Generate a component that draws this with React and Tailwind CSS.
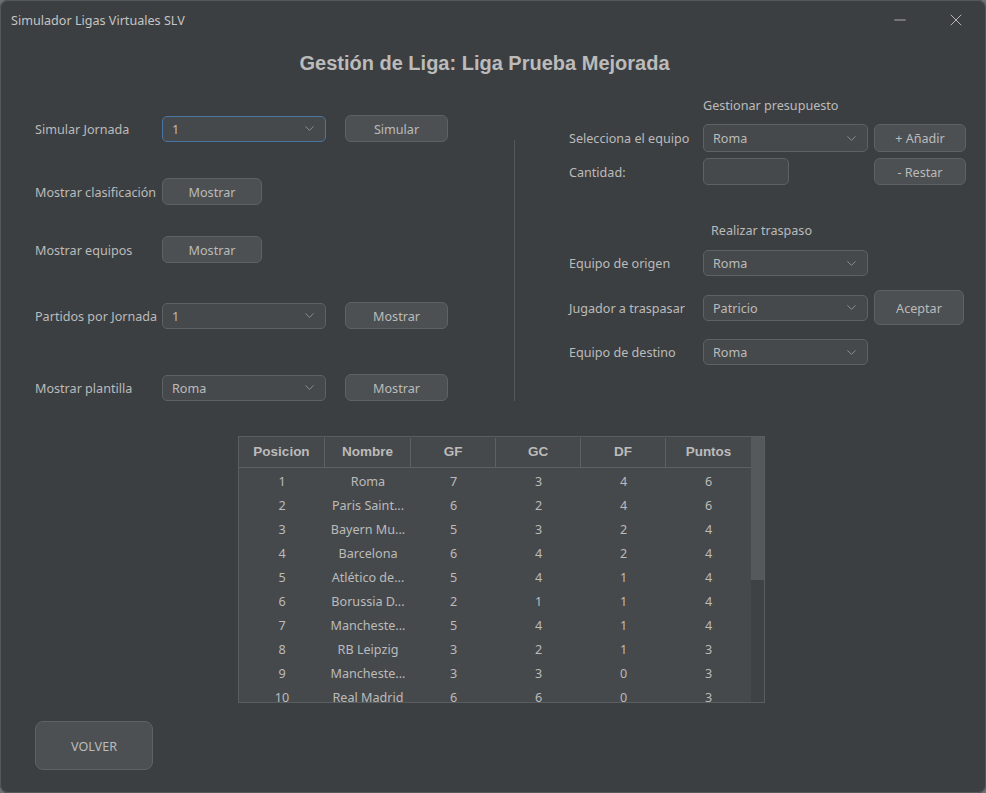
import { ChevronDown, Minus, X } from "lucide-react";

const TEAMS = [
  [1, "Roma", 7, 3, 4, 6],
  [2, "Paris Saint...", 6, 2, 4, 6],
  [3, "Bayern Mu...", 5, 3, 2, 4],
  [4, "Barcelona", 6, 4, 2, 4],
  [5, "Atlético de...", 5, 4, 1, 4],
  [6, "Borussia D...", 2, 1, 1, 4],
  [7, "Mancheste...", 5, 4, 1, 4],
  [8, "RB Leipzig", 3, 2, 1, 3],
  [9, "Mancheste...", 3, 3, 0, 3],
  [10, "Real Madrid", 6, 6, 0, 3],
];

const COLS = [
  { name: "Posicion", w: "w-[86px]" },
  { name: "Nombre", w: "w-[86px]" },
  { name: "GF", w: "w-[85px]" },
  { name: "GC", w: "w-[85px]" },
  { name: "DF", w: "w-[85px]" },
  { name: "Puntos", w: "w-[85px]" },
];

function Button({ children, className = "" }) {
  return (
    <div
      className={`flex items-center justify-center pt-[3px] rounded-[6px] bg-[#4c5052] border border-[#5e6264] text-[#bbbbbb] ${className}`}
    >
      {children}
    </div>
  );
}

function Combo({ value, focused, className = "" }) {
  return (
    <div
      className={`flex items-center justify-between rounded-[5px] bg-[#46494b] border pl-[9px] pr-[8px] ${
        focused ? "border-[#4a76a3]" : "border-[#5e6264]"
      } ${className}`}
    >
      <span className="pt-[3px]">{value}</span>
      <ChevronDown size={15} strokeWidth={1.3} className="text-[#9a9da0]" />
    </div>
  );
}

function LeftRow({ label, children, className = "" }) {
  return (
    <div className={`flex items-center ${className}`}>
      <span className="w-[127px] pt-[3px] whitespace-nowrap">{label}</span>
      {children}
    </div>
  );
}

function RightRow({ label, children, className = "" }) {
  return (
    <div className={`flex items-center ${className}`}>
      <span className="w-[134px] pt-[3px] whitespace-nowrap">{label}</span>
      {children}
    </div>
  );
}

export default function App() {
  return (
    <div className="w-[986px] h-[793px] bg-[#6e7072]">
      <div
        className="w-full h-full rounded-[8px] bg-[#3c3f41] shadow-[inset_0_0_0_1px_#55585a] flex flex-col overflow-hidden text-[#bbbbbb] text-[12.6px]"
        style={{ fontFamily: '"Noto Sans", "Open Sans", sans-serif' }}
      >
        {/* title bar */}
        <div className="h-[38px] flex items-center pl-[11px] pr-[20px] shrink-0">
          <span className="pt-[4px] text-[12.6px] text-[#c4c4c4]">Simulador Ligas Virtuales SLV</span>
          <div className="ml-auto flex items-center gap-[37px] pt-[1px]">
            <Minus size={18} strokeWidth={1} className="text-[#cfcfcf]" />
            <X size={20} strokeWidth={1} className="text-[#cfcfcf]" />
          </div>
        </div>

        {/* heading */}
        <div className="h-[50px] flex items-center justify-center pr-[17px] shrink-0">
          <h1
            className="text-[20px] font-bold text-[#bbbbbb]"
            style={{ fontFamily: '"Liberation Sans", Arial, sans-serif' }}
          >
            Gestión de Liga: Liga Prueba Mejorada
          </h1>
        </div>

        {/* controls */}
        <div className="flex h-[313px] shrink-0">
          <div className="ml-[35px] pt-[27px] flex flex-col">
            <LeftRow label="Simular Jornada" className="h-[27px]">
              <Combo value="1" focused className="w-[164px] h-[26px]" />
              <Button className="ml-[19px] w-[103px] h-[27px]">Simular</Button>
            </LeftRow>
            <LeftRow label="Mostrar clasificación" className="h-[27px] mt-[36px]">
              <Button className="w-[100px] h-[27px]">Mostrar</Button>
            </LeftRow>
            <LeftRow label="Mostrar equipos" className="h-[27px] mt-[31px]">
              <Button className="w-[100px] h-[27px]">Mostrar</Button>
            </LeftRow>
            <LeftRow label="Partidos por Jornada" className="h-[27px] mt-[39px]">
              <Combo value="1" className="w-[164px] h-[26px]" />
              <Button className="ml-[19px] w-[103px] h-[27px]">Mostrar</Button>
            </LeftRow>
            <LeftRow label="Mostrar plantilla" className="h-[27px] mt-[45px]">
              <Combo value="Roma" className="w-[164px] h-[26px]" />
              <Button className="ml-[19px] w-[103px] h-[27px]">Mostrar</Button>
            </LeftRow>
          </div>

          <div className="ml-[66px] mt-[52px] w-px h-[261px] bg-[#55585a]" />

          <div className="ml-[54px] pt-[8px] flex flex-col">
            <div className="h-[18px] pl-[134px] pt-[1px] leading-[18px] box-content">Gestionar presupuesto</div>
            <RightRow label="Selecciona el equipo" className="h-[28px] mt-[9px]">
              <Combo value="Roma" className="w-[165px] h-[28px]" />
              <Button className="ml-[6px] w-[92px] h-[28px]">+ Añadir</Button>
            </RightRow>
            <RightRow label="Cantidad:" className="h-[27px] mt-[6px]">
              <div className="w-[86px] h-[27px] rounded-[5px] bg-[#46494b] border border-[#5e6264]" />
              <Button className="ml-[85px] w-[92px] h-[27px]">- Restar</Button>
            </RightRow>
            <div className="h-[18px] pl-[142px] leading-[18px] mt-[37px]">Realizar traspaso</div>
            <RightRow label="Equipo de origen" className="h-[26px] mt-[10px]">
              <Combo value="Roma" className="w-[165px] h-[26px]" />
            </RightRow>
            <RightRow label="Jugador a traspasar" className="h-[35px] mt-[14px]">
              <Combo value="Patricio" className="w-[165px] h-[26px]" />
              <Button className="ml-[6px] w-[90px] h-[35px]">Aceptar</Button>
            </RightRow>
            <RightRow label="Equipo de destino" className="h-[26px] mt-[14px]">
              <Combo value="Roma" className="w-[165px] h-[26px]" />
            </RightRow>
          </div>
        </div>

        {/* table */}
        <div className="ml-[238px] mt-[35px] w-[527px] h-[267px] border border-[#5b5e60] flex shrink-0 bg-[#46494b]">
          <div className="w-[512px] flex flex-col overflow-hidden">
            <div
              className="h-[31px] flex shrink-0 border-b border-[#5e6164] font-bold text-[13.5px] pt-[1px]"
              style={{ fontFamily: '"Liberation Sans", Arial, sans-serif' }}
            >
              {COLS.map((c, i) => (
                <div
                  key={c.name}
                  className={`${c.w} flex items-center justify-center ${
                    i < COLS.length - 1 ? "border-r border-[#5e6164]" : ""
                  }`}
                >
                  {c.name}
                </div>
              ))}
            </div>
            <div className="pt-[2px] overflow-hidden">
              {TEAMS.map((row) => (
                <div key={row[0]} className="h-[24px] flex">
                  {row.map((v, i) => (
                    <div key={i} className={`${COLS[i].w} flex items-center justify-center whitespace-nowrap`}>
                      {v}
                    </div>
                  ))}
                </div>
              ))}
            </div>
          </div>
          <div className="w-[13px] flex flex-col bg-[#3f4244]">
            <div className="h-[143px] bg-[#56595b]" />
          </div>
        </div>

        {/* back */}
        <Button className="ml-[35px] mt-[18px] w-[118px] h-[49px] rounded-[8px] shrink-0">VOLVER</Button>
      </div>
    </div>
  );
}
